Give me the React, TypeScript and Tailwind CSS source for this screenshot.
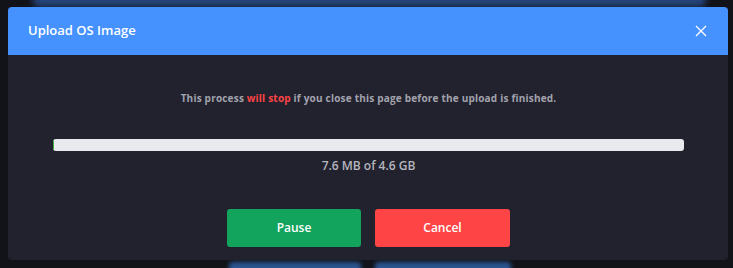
import React from "react";

export default function App() {
  return (
    <div
      className="relative w-[733px] h-[268px] overflow-hidden bg-[#121319]"
      style={{ fontFamily: '"Open Sans", "Liberation Sans", sans-serif' }}
    >
      {/* blurred background behind modal */}
      <div className="absolute left-[33px] top-[-20px] w-[673px] h-[27px] rounded-md bg-[#24447a] blur-[3px]" />
      <div className="absolute left-[229px] top-[262px] w-[132px] h-[20px] rounded bg-[#2a5590] blur-[2px]" />
      <div className="absolute left-[375px] top-[262px] w-[136px] h-[20px] rounded bg-[#2a5590] blur-[2px]" />

      <div className="relative ml-[8px] mt-[7px] w-[720px] h-[253px] rounded-[4px] overflow-hidden bg-[#22222f] flex flex-col">
        <div className="h-[48px] bg-[#4592ff] flex items-center justify-between pl-[20px] pr-[21px]">
          <span className="text-white text-[13px] font-semibold">Upload OS Image</span>
          <svg width="12" height="12" viewBox="0 0 12 12" fill="none">
            <path d="M1 1L11 11M11 1L1 11" stroke="white" strokeWidth="1.3" />
          </svg>
        </div>
        <div className="flex flex-col items-center pl-[45px] pr-[44px]">
          <p className="mt-[36px] text-[10px] leading-[14px] font-bold tracking-[0.2px] text-[#a3a3ad]">
            This process <span className="text-[#ff4444]">will stop</span> if you close this page before the upload is finished.
          </p>
          <div className="mt-[34px] w-full h-[12px] rounded-[3px] bg-[#e8eaed] overflow-hidden flex">
            <div className="w-[1px] h-full bg-[#3cb043]" />
          </div>
          <div className="mt-[7px] text-[12px] leading-[16px] font-semibold text-[#b5b5bd]">7.6 MB of 4.6 GB</div>
          <div className="mt-[35px] flex gap-[14px]">
            <button className="w-[134px] h-[38px] rounded-[3px] bg-[#12a35c] text-white text-[12px] font-semibold">
              Pause
            </button>
            <button className="w-[135px] h-[38px] rounded-[3px] bg-[#ff4446] text-white text-[12px] font-semibold">
              Cancel
            </button>
          </div>
        </div>
      </div>
    </div>
  );
}
